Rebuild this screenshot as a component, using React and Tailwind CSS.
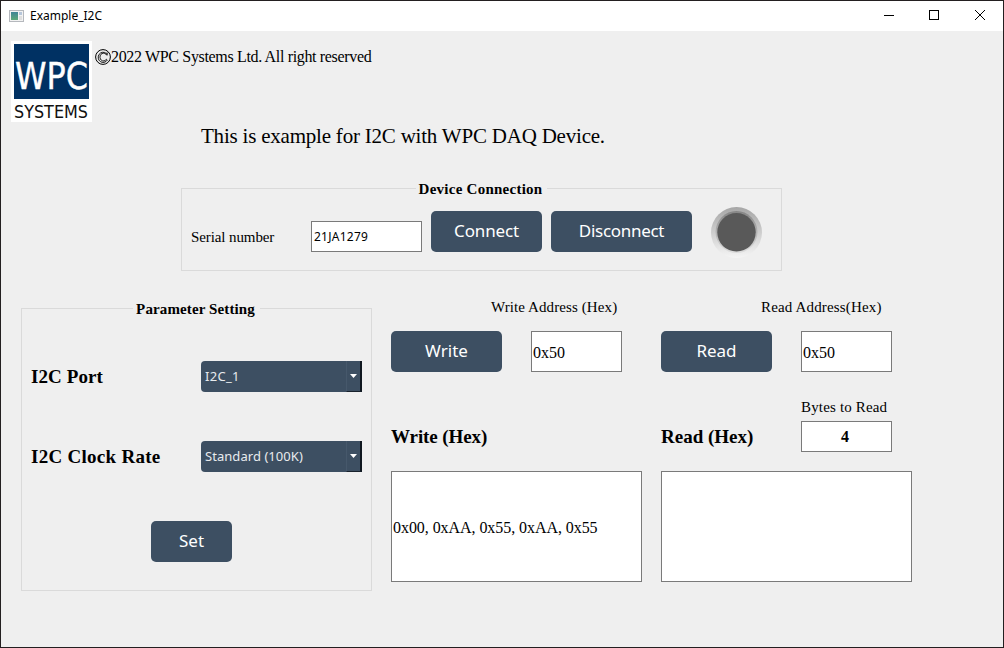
import React from "react";

const serif = "font-['Liberation_Serif',serif]";
const sans = "font-['Noto_Sans',sans-serif]";

function Label({ className = "", children }) {
  return <span className={`${serif} block whitespace-nowrap text-black ${className}`}>{children}</span>;
}

function Button({ className = "", textClass = "", children }) {
  return (
    <button className={`${sans} flex h-[41px] shrink-0 items-center justify-center rounded-[5px] bg-[#3d4f62] pb-[3px] text-[17px] leading-none text-white ${className}`}>
      <span className={`whitespace-nowrap ${textClass}`}>{children}</span>
    </button>
  );
}

function Field({ className = "", textClass = "", children }) {
  return (
    <div className={`flex shrink-0 items-center border border-[#7a7a7a] bg-white text-black ${className}`}>
      <span className={`whitespace-nowrap ${textClass}`}>{children}</span>
    </div>
  );
}

function Combo({ children, textClass = "" }) {
  return (
    <div className="flex h-[31px] w-[161px] items-stretch overflow-hidden rounded-l-[4px] bg-[#3d4f62] text-[#e8ebee]">
      <span className={`${sans} flex flex-1 items-center whitespace-nowrap pb-px pl-1 text-[13px] leading-none ${textClass}`}>{children}</span>
      <span className="flex w-4 items-center justify-center border-b border-l border-r-2 border-b-[#18222d] border-l-[#46586b] border-r-[#101820]">
        <svg width="7" height="4" viewBox="0 0 7 4"><path d="M0 0h7L3.5 4z" fill="#fff" /></svg>
      </span>
    </div>
  );
}

function Group({ title, className = "", legendClass = "", children }) {
  return (
    <fieldset className={`shrink-0 border border-[#dadada] ${className}`}>
      <legend className={`${serif} mx-auto h-[17px] whitespace-nowrap pl-[3px] pr-[5px] text-[15px] font-bold leading-[19px] text-black ${legendClass}`}>{title}</legend>
      {children}
    </fieldset>
  );
}

function Logo() {
  return (
    <svg className="shrink-0 overflow-visible" width="81" height="81" viewBox="0 0 81 81">
      <rect width="81" height="81" fill="#fff" />
      <rect x="3" y="3" width="75" height="55" fill="#003163" />
      <text x="4" y="47.8" fontFamily="DejaVu Sans, sans-serif" fontSize="37" fill="#fff" stroke="#fff" strokeWidth=".4" textLength="73" lengthAdjust="spacingAndGlyphs">WPC</text>
      <text x="3" y="77.3" fontFamily="DejaVu Sans, sans-serif" fontSize="18.5" fill="#111" textLength="74" lengthAdjust="spacingAndGlyphs">SYSTEMS</text>
    </svg>
  );
}

function TitleBar() {
  return (
    <div className="flex h-[30px] shrink-0 items-center bg-white">
      <svg className="-mt-px ml-2 shrink-0" width="16" height="14" viewBox="0 0 16 14">
        <defs>
          <linearGradient id="pane" x1="0" y1="0" x2="0" y2="1">
            <stop offset="0" stopColor="#3f8496" /><stop offset="1" stopColor="#5da878" />
          </linearGradient>
        </defs>
        <rect x=".5" y="1.5" width="14" height="11" fill="#f2f2f2" stroke="#b5b8bd" />
        <rect x="2" y="3" width="7" height="8" fill="url(#pane)" />
        <rect x="10" y="3" width="3" height="3" fill="#b6c6da" />
        <rect x="10" y="7" width="3" height="4" fill="#dedede" />
      </svg>
      <span className={`${sans} ml-[5px] whitespace-nowrap text-[12px] leading-none text-black`}>Example_I2C</span>
      <svg className="-mt-0.5 ml-auto mr-[17px] shrink-0" width="103" height="12" viewBox="0 0 103 12" fill="none" stroke="#000">
        <path d="M1 6.5h10" />
        <rect x="46.5" y="1.5" width="9" height="9" />
        <path d="M92 1l10 10M102 1L92 11" />
      </svg>
    </div>
  );
}

function Led() {
  return (
    <svg className="ml-[18px] shrink-0" width="53" height="51" viewBox="0 0 53 51">
      <defs>
        <linearGradient id="ring" x1="0" y1="0" x2="0" y2="1">
          <stop offset="0" stopColor="#a6a6a6" /><stop offset="1" stopColor="#f5f5f5" />
        </linearGradient>
        <linearGradient id="inner" x1="0" y1="0" x2="0" y2="1">
          <stop offset="0" stopColor="#858585" /><stop offset="1" stopColor="#dedede" />
        </linearGradient>
      </defs>
      <circle cx="26.5" cy="25.5" r="25.5" fill="url(#ring)" />
      <circle cx="26.5" cy="25" r="21" fill="url(#inner)" />
      <circle cx="26.5" cy="25.3" r="19.2" fill="#595959" />
    </svg>
  );
}

export default function App() {
  return (
    <div className="flex h-[648px] w-[1004px] flex-col overflow-hidden border border-[#231f20] bg-[#efefef]">
      <TitleBar />
      <header className="ml-[10px] mt-[10px] flex h-[81px] shrink-0 items-start">
        <Logo />
        <Label className="ml-[3px] mt-[6px] flex items-center text-[16px] leading-5 tracking-[-0.34px]">
          <svg width="16" height="16" viewBox="0 0 16 16" fill="none" stroke="#000">
            <circle cx="8" cy="8" r="7.4" strokeWidth="1" />
            <path d="M12.2 6.2V3.8L11.2 4.4A4.9 5.1 0 1 0 12.3 11L11.4 10.2A3.5 3.9 0 1 1 11 5.4Z" strokeWidth=".9" />
          </svg>
          <span>2022 WPC Systems Ltd. All right reserved</span>
        </Label>
      </header>
      <Label className="ml-[200px] mt-[2px] h-6 text-[21px] leading-6 tracking-[-0.21px]">This is example for I2C with WPC DAQ Device.</Label>
      <Group title="Device Connection" className="ml-[180px] mt-[32px] h-[91px] w-[601px]" legendClass="tracking-[0.25px]">
        <div className="ml-[9px] mt-[10px] flex h-[51px] items-start">
          <Label className="mt-5 w-[120px] text-[15px] leading-5 tracking-[-0.1px]">Serial number</Label>
          <Field className="mt-[14px] h-[31px] w-[111px] pl-[2px]" textClass={`${sans} text-[12px] leading-none tracking-[0.25px]`}>21JA1279</Field>
          <Button className="ml-[9px] mt-1 w-[111px]" textClass="tracking-[-0.15px]">Connect</Button>
          <Button className="ml-[9px] mt-1 w-[141px]" textClass="tracking-[-0.3px]">Disconnect</Button>
          <Led />
        </div>
      </Group>
      <main className="mt-[29px] flex items-start">
        <Group title="Parameter Setting" className="ml-[20px] h-[291px] w-[351px]" legendClass="tracking-[0.12px]">
          <div className="ml-[8px] mt-[44px] flex h-[31px] items-center">
            <Label className="w-[171px] pl-px text-[19px] font-bold leading-6 tracking-[0.1px]">I2C Port</Label>
            <Combo textClass="tracking-[0.3px]">I2C_1</Combo>
          </div>
          <div className="ml-[8px] mt-[49px] flex h-[31px] items-center">
            <Label className="w-[171px] pl-px text-[19px] font-bold leading-6 tracking-[0.28px]">I2C Clock Rate</Label>
            <Combo textClass="tracking-[0.05px]">Standard (100K)</Combo>
          </div>
          <Button className="ml-[129px] mt-[49px] w-[81px]">Set</Button>
        </Group>
        <section className="ml-[19px] w-[251px] shrink-0">
          <Label className="ml-[100px] mt-[-3px] text-[15px] leading-5 tracking-[0.1px]">Write Address (Hex)</Label>
          <div className="mt-[14px] flex">
            <Button className="w-[111px]">Write</Button>
            <Field className="ml-[29px] h-[41px] w-[91px] pl-px pt-0.5" textClass={`${serif} text-[16px]`}>0x50</Field>
          </div>
          <Label className="mt-[53px] text-[19px] font-bold leading-6 tracking-[-0.1px]">Write (Hex)</Label>
          <Field className="mt-[22px] h-[111px] w-[251px] pl-px pt-0.5" textClass={`${serif} text-[16px] tracking-[-0.06px]`}>0x00, 0xAA, 0x55, 0xAA, 0x55</Field>
        </section>
        <section className="ml-[19px] w-[251px] shrink-0">
          <Label className="ml-[100px] mt-[-3px] text-[15px] leading-5 tracking-[0.16px]">Read Address(Hex)</Label>
          <div className="mt-[14px] flex">
            <Button className="w-[111px]">Read</Button>
            <Field className="ml-[29px] h-[41px] w-[91px] pl-px pt-0.5" textClass={`${serif} text-[16px]`}>0x50</Field>
          </div>
          <div className="mt-[25px] flex h-[55px]">
            <Label className="mt-7 w-[140px] text-[19px] font-bold leading-6">Read (Hex)</Label>
            <div>
              <Label className="h-6 text-[15px] leading-5 tracking-[0.16px]">Bytes to Read</Label>
              <Field className="h-[31px] w-[91px] justify-center pr-[3px] pt-px" textClass={`${serif} text-[16px] font-bold`}>4</Field>
            </div>
          </div>
          <Field className="mt-[19px] h-[111px] w-[251px]" />
        </section>
      </main>
    </div>
  );
}
